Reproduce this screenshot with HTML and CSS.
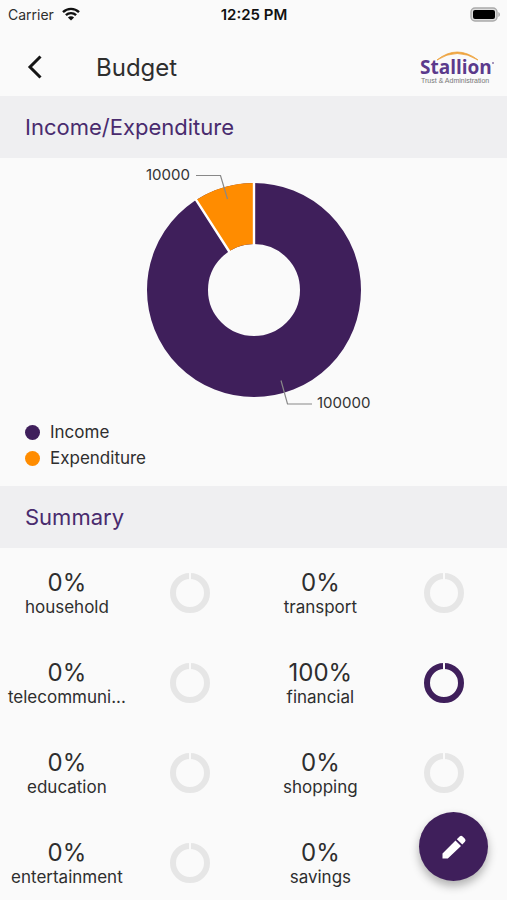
FILE: index.html
```html
<!DOCTYPE html>
<html lang="en">
<head>
<meta charset="utf-8">
<meta name="viewport" content="width=device-width, initial-scale=1">
<title>Budget</title>
<link rel="stylesheet" href="styles.css">
</head>
<body>
<div class="status">
  <div class="carrier">
    <span>Carrier</span>
    <svg width="18" height="14" viewBox="0 0 18 14" aria-hidden="true">
      <g fill="none" stroke="#111" stroke-width="2.4">
        <path d="M1 5.2a11.4 11.4 0 0 1 16 0"/>
        <path d="M3.9 8.2a7.3 7.3 0 0 1 10.2 0"/>
      </g>
      <path d="M9 13.6 5.9 10.5a4.4 4.4 0 0 1 6.2 0z" fill="#111"/>
    </svg>
  </div>
  <span class="time">12:25 PM</span>
  <div class="battery">
    <svg width="31" height="15" viewBox="0 0 31 15" aria-hidden="true">
      <rect x="2" y="1" width="26" height="13" rx="4" fill="#ddd" stroke="#aaa" stroke-width="1.4"/>
      <rect x="4" y="3" width="22" height="9" rx="2" fill="#000"/>
      <path d="M29.3 5v5c2.2-.8 2.2-4.2 0-5z" fill="#aaa"/>
    </svg>
  </div>
</div>
<header class="header">
  <button class="back" type="button" aria-label="Back">
    <svg width="16" height="24" viewBox="0 0 16 24" aria-hidden="true"><path d="M13.5 1.5 3 12l10.5 10.5" fill="none" stroke="#151515" stroke-width="3"/></svg>
  </button>
  <h1 class="title">Budget</h1>
  <svg class="logo" width="76" height="36" viewBox="0 0 76 36" role="img" aria-label="Stallion Trust &amp; Administration">
    <path d="M18 11Q38-5 59 11Q38-2 18 11z" fill="#eda23c" stroke="#eda23c" stroke-width=".8"/>
    <text class="brand" x="1" y="25">Stallion</text>
    <circle cx="74" cy="14" r="1" fill="#8d76a8"/>
    <text class="tagline" x="2" y="34">Trust &amp; Administration</text>
  </svg>
</header>
<main>
  <h2 class="section">Income/Expenditure</h2>
  <section class="overview">
    <svg class="chart" width="260" height="256" viewBox="124 158 260 256" role="img" aria-label="Income 100000, expenditure 10000">
      <circle cx="254" cy="290" r="76.5" fill="none" stroke="#3f1f5b" stroke-width="61"/>
      <path d="M196.2 200A107 107 0 0 1 254 183V244A46 46 0 0 0 229.1 251.3z" fill="#ff8c00"/>
      <path d="M254 181V246M195.1 198.3 230.2 253" stroke="#fff" stroke-width="2.4"/>
      <path d="M196 175.5H220.5L227.5 199M281 380.5 287.5 404H312" fill="none" stroke="#888" stroke-width="1.2"/>
      <text class="value" x="146" y="180">10000</text>
      <text class="value" x="317" y="408">100000</text>
    </svg>
    <ul class="legend">
      <li><span class="dot income"></span>Income</li>
      <li><span class="dot expense"></span>Expenditure</li>
    </ul>
  </section>
  <h2 class="section">Summary</h2>
  <section class="grid">
    <div class="cell"><div class="label"><strong>0%</strong><span>household</span></div><svg class="ring" viewBox="0 0 42 42" aria-hidden="true"><circle cx="21" cy="21" r="17"/><path d="M21 0V8"/></svg></div>
    <div class="cell"><div class="label"><strong>0%</strong><span>transport</span></div><svg class="ring" viewBox="0 0 42 42" aria-hidden="true"><circle cx="21" cy="21" r="17"/><path d="M21 0V8"/></svg></div>
    <div class="cell"><div class="label"><strong>0%</strong><span>telecommuni...</span></div><svg class="ring" viewBox="0 0 42 42" aria-hidden="true"><circle cx="21" cy="21" r="17"/><path d="M21 0V8"/></svg></div>
    <div class="cell"><div class="label"><strong>100%</strong><span>financial</span></div><svg class="ring full" viewBox="0 0 42 42" aria-hidden="true"><circle cx="21" cy="21" r="17"/><path d="M21 0V8"/></svg></div>
    <div class="cell"><div class="label"><strong>0%</strong><span>education</span></div><svg class="ring" viewBox="0 0 42 42" aria-hidden="true"><circle cx="21" cy="21" r="17"/><path d="M21 0V8"/></svg></div>
    <div class="cell"><div class="label"><strong>0%</strong><span>shopping</span></div><svg class="ring" viewBox="0 0 42 42" aria-hidden="true"><circle cx="21" cy="21" r="17"/><path d="M21 0V8"/></svg></div>
    <div class="cell"><div class="label"><strong>0%</strong><span>entertainment</span></div><svg class="ring" viewBox="0 0 42 42" aria-hidden="true"><circle cx="21" cy="21" r="17"/><path d="M21 0V8"/></svg></div>
    <div class="cell"><div class="label"><strong>0%</strong><span>savings</span></div></div>
  </section>
</main>
<button class="fab" type="button" aria-label="Edit budget">
  <svg width="32" height="32" viewBox="0 0 32 32" aria-hidden="true"><path fill="#fff" d="M4.5 27.5V22.5L17.500 9.500l5.500 5.500L9.800 27.500zM18.800 8.200l2.800-2.800q1.500-1.400 3 0l2.300 2.300q1.400 1.500 0 3L24.300 13.500z"/></svg>
</button>
</body>
</html>
```
FILE: styles.css
```css
* {
  box-sizing: border-box;
}

body {
  margin: 0;
  background: #fafafa;
  color: #2e2e2e;
  font-family: Inter, "Liberation Sans", sans-serif;
  font-size: 17px;
}

h1, h2, ul {
  margin: 0;
  padding: 0;
}

button {
  display: grid;
  place-items: center;
  padding: 0;
  border: 0;
  background: none;
  cursor: pointer;
}

.status {
  display: grid;
  grid-template-columns: 1fr auto 1fr;
  align-items: center;
  height: 28px;
  padding: 0 7px 0 8px;
  font-size: 14px;
}

.carrier {
  display: flex;
  align-items: center;
  gap: 8px;
}

.time {
  color: #111;
  font-size: 15px;
  font-weight: 600;
}

.battery {
  display: flex;
  justify-content: flex-end;
}

.header {
  display: flex;
  align-items: center;
  height: 68px;
  padding: 10px 12px 0 16px;
}

.back {
  width: 38px;
  height: 40px;
}

.title {
  flex: 1;
  padding-left: 42px;
  font-size: 24px;
  font-weight: 400;
}

.brand {
  fill: #5b3a8c;
  font-family: "Open Sans", sans-serif;
  font-size: 19px;
  font-weight: 700;
}

.tagline {
  fill: #777;
  font-family: "Liberation Sans", sans-serif;
  font-size: 7px;
}

.section {
  padding: 0 25px;
  background: #efeff1;
  color: #492b6e;
  font-size: 22px;
  font-weight: 400;
  line-height: 62px;
}

.overview {
  padding-bottom: 15px;
}

.chart {
  display: block;
  margin: 0 auto;
}

.value {
  fill: #333;
  font-size: 15px;
}

.legend {
  padding: 5px 25px 0;
  list-style: none;
}

.legend li {
  display: flex;
  align-items: center;
  gap: 10px;
  line-height: 26px;
}

.dot {
  width: 15px;
  height: 15px;
  border-radius: 50%;
}

.income {
  background: #3f1f5b;
}

.expense {
  background: #ff8c00;
}

.grid {
  display: grid;
  grid-template-columns: 1fr 1fr;
  grid-auto-rows: 90px;
}

.cell {
  display: grid;
  grid-template-columns: minmax(0, 1fr) minmax(0, 1fr);
  align-items: center;
  justify-items: center;
}

.label {
  width: 100%;
  padding-left: 7px;
  text-align: center;
}

.label strong,
.label span {
  display: block;
  white-space: nowrap;
}

.label strong {
  font-size: 24px;
  font-weight: 400;
  line-height: 28px;
}

.label span {
  line-height: 20px;
}

.ring {
  width: 42px;
  height: 42px;
  fill: none;
}

.ring circle {
  stroke: #e6e6e6;
  stroke-width: 6;
}

.ring.full circle {
  stroke: #3f1f5b;
}

.ring path {
  stroke: #fafafa;
  stroke-width: 2;
}

.fab {
  position: fixed;
  right: 19px;
  bottom: 19px;
  width: 69px;
  height: 69px;
  border-radius: 50%;
  background: #3f1f5b;
  box-shadow: 0 5px 10px rgba(0, 0, 0, 0.3);
}
```
